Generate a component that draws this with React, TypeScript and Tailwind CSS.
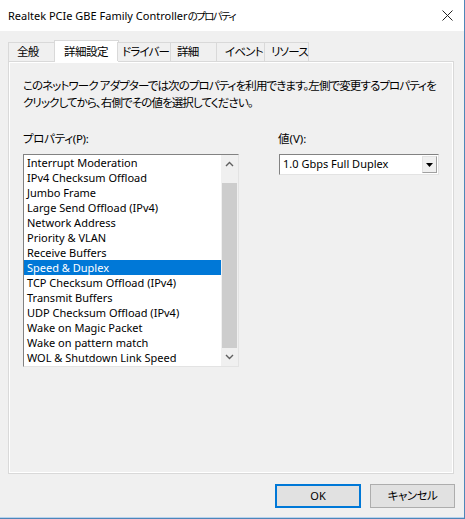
import React from "react";

const FONT = {
  fontFamily: '"Noto Sans", "Noto Sans CJK JP", sans-serif',
  fontFeatureSettings: '"palt"',
};

const tabs = [
  { label: "全般", w: 47, pl: 8 },
  { label: "詳細設定", w: 63, pl: 9, active: true },
  { label: "ドライバー", w: 54, pl: 4 },
  { label: "詳細", w: 47, pl: 6 },
  { label: "イベント", w: 49, pl: 8 },
  { label: "リソース", w: 45, pl: 6 },
];

const items = [
  "Interrupt Moderation",
  "IPv4 Checksum Offload",
  "Jumbo Frame",
  "Large Send Offload (IPv4)",
  "Network Address",
  "Priority & VLAN",
  "Receive Buffers",
  "Speed & Duplex",
  "TCP Checksum Offload (IPv4)",
  "Transmit Buffers",
  "UDP Checksum Offload (IPv4)",
  "Wake on Magic Packet",
  "Wake on pattern match",
  "WOL & Shutdown Link Speed",
];

function Chevron({ up }: { up?: boolean }) {
  return (
    <svg width="9" height="6" viewBox="0 0 9 6" className="block">
      <path
        d={up ? "M1 5 L4.5 1.5 L8 5" : "M1 1 L4.5 4.5 L8 1"}
        fill="none"
        stroke="#606060"
        strokeWidth="1.4"
      />
    </svg>
  );
}

export default function App() {
  return (
    <div
      className="w-[465px] h-[519px] flex flex-col bg-[#f0f0f0] text-[11px] text-black border-r border-b border-[#4f86b8] overflow-hidden"
      style={FONT}
    >
      {/* Title bar */}
      <div className="h-[31px] shrink-0 bg-white flex items-center justify-between pl-[8px] pr-[11px]">
        <span className="text-[11px] leading-none whitespace-nowrap">
          Realtek PCIe GBE Family Controller
          <span className="text-[10.5px] tracking-[-1.6px]">のプロパティ</span>
        </span>
        <svg width="11" height="11" viewBox="0 0 11 11">
          <path d="M0.5 0.5 L10.5 10.5 M10.5 0.5 L0.5 10.5" stroke="#222" strokeWidth="1" />
        </svg>
      </div>

      {/* Tabs */}
      <div className="mt-[9px] pl-[8px] flex items-end h-[21px] relative z-10">
        {tabs.map((t) =>
          t.active ? (
            <div
              key={t.label}
              className="h-[22px] -mx-[1px] -mb-[1px] bg-white border border-b-0 border-[#d9d9d9] flex items-center whitespace-nowrap text-[11.5px] tracking-[-0.5px]"
              style={{ width: t.w + 2, paddingLeft: t.pl }}
            >
              {t.label}
            </div>
          ) : (
            <div
              key={t.label}
              className="h-[19px] bg-[#f0f0f0] border border-b-0 border-[#d9d9d9] flex items-center whitespace-nowrap text-[11.5px] tracking-[-0.8px] -ml-[1px] first:ml-0"
              style={{ width: t.w, paddingLeft: t.pl }}
            >
              {t.label}
            </div>
          )
        )}
      </div>

      {/* Panel */}
      <div className="mx-[8px] w-[446px] h-[413px] border border-[#d9d9d9] shadow-[inset_0_0_0_1px_#ffffff] bg-[#f0f0f0] px-[14px] pt-[15px]">
        <p className="leading-[17px] text-[11.5px] tracking-[-0.9px] whitespace-nowrap">
          このネットワーク アダプターでは次のプロパティを利用できます。左側で変更するプロパティを
          <br />
          クリックしてから、右側でその値を選択してください。
        </p>

        <div className="mt-[19px] flex">
          <div className="w-[216px]">
            <div className="leading-[18px] text-[11.5px] tracking-[-0.3px]">プロパティ(P):</div>
            <div className="mt-[6px] h-[213px] border-t border-l border-[#828282] border-r border-b border-r-[#e3e3e3] border-b-[#e3e3e3] bg-white flex">
              <ul className="flex-1 min-w-0">
                {items.map((it) => (
                  <li
                    key={it}
                    className={
                      "h-[15px] leading-[15px] pl-[3px] whitespace-nowrap " +
                      (it === "Speed & Duplex" ? "bg-[#0078d7] text-white" : "")
                    }
                  >
                    {it}
                  </li>
                ))}
              </ul>
              <div className="w-[17px] bg-[#f0f0f0] flex flex-col">
                <div className="h-[17px] flex items-center justify-center">
                  <Chevron up />
                </div>
                <div className="mt-[11px] mx-[1px] h-[165px] bg-[#cdcdcd]" />
                <div className="flex-1 flex items-center justify-center">
                  <Chevron />
                </div>
              </div>
            </div>
          </div>

          <div className="ml-[39px]">
            <div className="leading-[18px] text-[11.5px]">値(V):</div>
            <div className="mt-[6px] ml-[1px] w-[160px] h-[21px] bg-white border-t border-l border-[#828282] border-r border-b border-r-[#e3e3e3] border-b-[#e3e3e3] flex items-center">
              <span className="flex-1 pl-[3px] whitespace-nowrap">1.0 Gbps Full Duplex</span>
              <div className="w-[15px] h-[17px] mr-[1px] bg-[#f0f0f0] border border-[#e3e3e3] border-r-[#a0a0a0] border-b-[#a0a0a0] flex items-center justify-center">
                <svg width="7" height="4" viewBox="0 0 7 4">
                  <path d="M0 0 L7 0 L3.5 4 Z" fill="#000" />
                </svg>
              </div>
            </div>
          </div>
        </div>
      </div>

      {/* Buttons */}
      <div className="mt-[10px] flex justify-end pr-[9px] gap-[9px]">
        <button className="w-[86px] h-[24px] bg-[#e1e1e1] border-2 border-[#0078d7] text-[11px]">OK</button>
        <button className="w-[85px] h-[24px] bg-[#e1e1e1] border border-[#adadad] text-[11.5px] tracking-[-0.5px]">キャンセル</button>
      </div>
      <div className="flex-1" />
      <div className="h-[1px] bg-[#b7d3ee]" />
    </div>
  );
}
